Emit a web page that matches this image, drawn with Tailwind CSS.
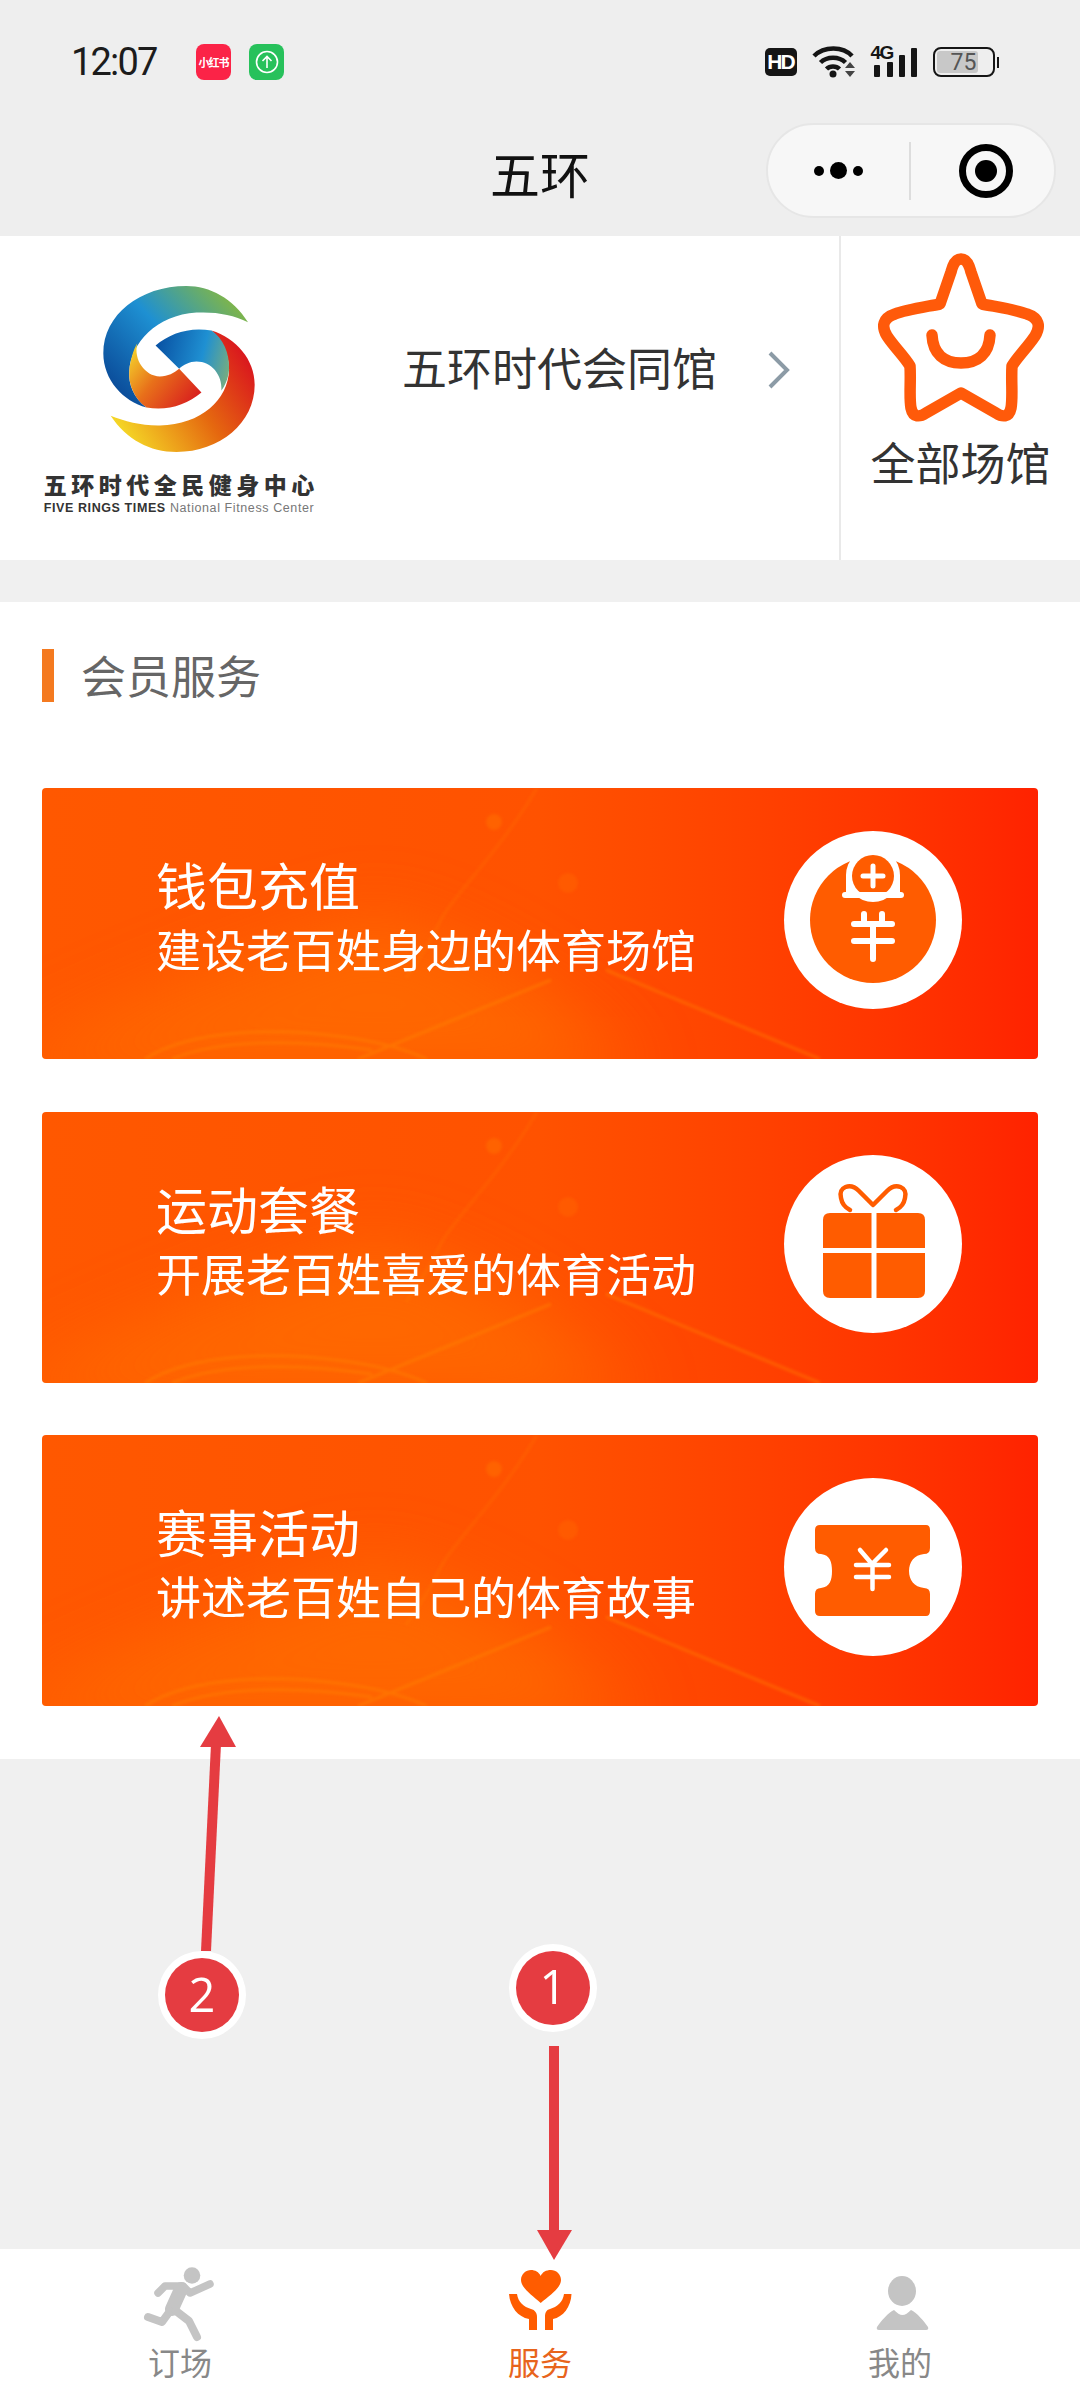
<!DOCTYPE html>
<html lang="zh-CN">
<head>
    <meta charset="UTF-8">
    <meta name="viewport" content="width=device-width, initial-scale=1.0">
    <title>五环</title>
    <script src="https://cdn.jsdelivr.net/npm/@tailwindcss/browser@4"></script>
</head>
<body class="bg-[#f0f0f0] font-['Noto_Sans_CJK_SC',sans-serif]">
<div class="relative flex flex-col w-[1080px] h-[2400px] overflow-hidden">

    <!-- status bar -->
    <div class="flex items-center h-[124px] bg-[#eeeeee] pl-[71px] pr-[81px]">
        <span class="w-[125px] font-['Roboto',sans-serif] text-[38px] leading-none text-[#1c1c1c] tracking-[-1.8px]">12:07</span>
        <div class="flex items-center justify-center w-[35px] h-[36px] rounded-[8px] bg-[#fb2347] text-white text-[11px] font-bold tracking-[-1px] whitespace-nowrap overflow-hidden">小红书</div>
        <div class="flex items-center justify-center w-[35px] h-[36px] ml-[18px] rounded-[8px] bg-[#27c15b]">
            <svg width="24" height="24" viewBox="0 0 24 24" fill="none" stroke="white" stroke-width="1.6"><circle cx="12" cy="12" r="10.5"/><path d="M12 18V6.5M7.5 11 12 6.5l4.500 4.500"/></svg>
        </div>
        <div class="flex items-center ml-auto h-[40px]">
            <div class="flex items-center justify-center w-[32px] h-[28px] rounded-[5px] bg-[#151515] text-white font-['Liberation_Sans',sans-serif] font-bold text-[21px] tracking-[-2px]">HD</div>
            <svg class="ml-[15px]" width="44" height="34" viewBox="0 0 44 34" fill="none" stroke="#151515" stroke-width="4.500">
                <path d="M2 11C12 1 31 1 40 11"/>
                <path d="M8.500 17.500C15 11 27 11 33.500 17.500"/>
                <path d="M14.500 24C18 20.500 24 20.500 27.500 24"/>
                <circle cx="21" cy="29" r="3.500" fill="#151515" stroke="none"/>
                <path d="M38 17l-5 6h10zM38 32l-5-6h10z" fill="#444" stroke="none"/>
            </svg>
            <div class="relative w-[48px] h-[32px] ml-[13px]">
                <span class="absolute left-[2px] top-[-3px] font-['Liberation_Sans',sans-serif] font-bold text-[19px] leading-[19px] tracking-[-1.5px] text-[#151515]">4G</span>
                <svg class="absolute inset-0" width="48" height="32" viewBox="0 0 48 32" fill="#151515">
                    <rect x="5" y="19" width="6" height="12" rx="1"/>
                    <rect x="18" y="16" width="6" height="15" rx="1"/>
                    <rect x="30" y="9" width="6" height="22" rx="1"/>
                    <rect x="42" y="2" width="6" height="29" rx="1"/>
                </svg>
            </div>
            <div class="flex items-center ml-[16px]">
                <div class="relative w-[62px] h-[30px] rounded-[8px] border-[2.500px] border-[#151515]">
                    <div class="absolute left-[2px] top-[2px] bottom-[2px] w-[41px] bg-[#c8c8c8] rounded-[3px]"></div>
                    <span class="absolute inset-0 flex items-center justify-center font-['Roboto',sans-serif] text-[23px] leading-none text-[#555555]">75</span>
                </div>
                <div class="w-[2.500px] h-[11px] ml-[2px] bg-[#151515]"></div>
            </div>
        </div>
    </div>

    <!-- nav bar -->
    <div class="relative h-[112px] bg-[#eeeeee]">
        <div class="flex items-center justify-center h-[96px] text-[50px] text-[#111111]">五环</div>
        <div class="absolute right-[24px] top-[-1px] flex items-center w-[290px] h-[95px] rounded-full bg-[#f7f7f7] border-2 border-[#e6e6e6]">
            <div class="flex items-center justify-center gap-[6px] w-[141px]">
                <span class="w-[10px] h-[10px] rounded-full bg-black"></span>
                <span class="w-[17px] h-[17px] rounded-full bg-black"></span>
                <span class="w-[10px] h-[10px] rounded-full bg-black"></span>
            </div>
            <div class="w-[2px] h-[58px] bg-[#dddddd]"></div>
            <div class="flex items-center justify-center flex-1 pl-[7px]">
                <div class="flex items-center justify-center w-[54px] h-[54px] rounded-full border-[7px] border-black">
                    <span class="w-[22px] h-[22px] rounded-full bg-black"></span>
                </div>
            </div>
        </div>
    </div>

    <!-- venue row -->
    <div class="flex h-[324px] bg-white">
        <div class="flex items-start w-[841px] border-r-2 border-[#e9e9e9]">
            <div class="flex flex-col items-center w-[270px] ml-[44px] mt-[50px] text-[#333333]">
                <svg width="152" height="166" viewBox="250 78 455 499">
                    <defs>
                        <linearGradient id="lgBlue" x1="0.1" y1="0.9" x2="1" y2="0.2">
                            <stop offset="0" stop-color="#0a4a98"/><stop offset="0.5" stop-color="#1e90d2"/><stop offset="1" stop-color="#86b840"/>
                        </linearGradient>
                        <linearGradient id="lgRed" x1="0" y1="0.8" x2="1" y2="0.25">
                            <stop offset="0" stop-color="#f6e028"/><stop offset="0.55" stop-color="#e5680f"/><stop offset="1" stop-color="#d9121f"/>
                        </linearGradient>
                        <linearGradient id="lgInBlue" x1="0" y1="0.5" x2="1" y2="0.7">
                            <stop offset="0" stop-color="#0a55a6"/><stop offset="0.6" stop-color="#1f90d2"/><stop offset="1" stop-color="#76ad80"/>
                        </linearGradient>
                        <linearGradient id="lgInOrange" x1="0" y1="0.1" x2="1" y2="0.8">
                            <stop offset="0" stop-color="#f4d62c"/><stop offset="0.45" stop-color="#e8701a"/><stop offset="1" stop-color="#d81c1e"/>
                        </linearGradient>
                    </defs>
                    <path fill="url(#lgBlue)" d="M685 187C640 115 570 78 500 78C360 78 250 165 250 280C250 360 310 425 380 443C340 415 325 370 328 335C332 250 410 165 530 158C590 155 640 165 685 187Z"/>
                    <path fill="url(#lgRed)" d="M272 468C320 540 390 577 470 577C600 577 705 490 705 375C705 300 650 235 575 212C610 245 628 285 628 330C625 420 545 495 420 497C365 498 315 485 272 468Z"/>
                    <path fill="url(#lgInBlue)" d="M407 257C450 220 510 200 575 212C610 235 630 280 628 330C626 355 615 380 605 392C608 345 575 305 530 305C510 305 490 315 478 327Z"/>
                    <path fill="url(#lgInOrange)" d="M545 398C500 435 440 455 380 443C345 420 325 375 328 335C330 305 340 270 352 250C340 300 375 348 420 350C445 350 462 340 478 327Z"/>
                </svg>
                <div class="mt-[19px] text-[23px] leading-[26px] font-black tracking-[4.500px] mr-[-4.500px] whitespace-nowrap">五环时代全民健身中心</div>
                <div class="mt-[3px] font-['Liberation_Sans',sans-serif] text-[12.500px] leading-[16px] tracking-[0.6px] whitespace-nowrap text-[#777777]"><span class="font-bold text-[#333333]">FIVE RINGS TIMES</span> National Fitness Center</div>
            </div>
            <div class="ml-[88px] mt-[101px] text-[45px] leading-[60px] text-[#333333] whitespace-nowrap">五环时代会同馆</div>
            <svg class="ml-[50px] mt-[115px]" width="24" height="38" viewBox="0 0 24 38" fill="none" stroke="#8c9ba6" stroke-width="4"><path d="M3 2 20 19 3 36"/></svg>
        </div>
        <div class="flex flex-col items-center flex-1 pt-[14px]">
            <svg width="176" height="176" viewBox="1 0 176 176" fill="none" stroke="#ff5a0a" stroke-width="11.500" stroke-linecap="round" stroke-linejoin="round">
                <path d="M89 9C94 9 97 14 99 22L110 54C125 57 145 60 155 64C167 68 169 76 163 86C155 98 146 106 140 116C139 130 141 148 139 158C137 168 130 167 124 163L89 143L54 163C48 167 41 168 39 158C37 148 39 130 38 116C32 106 23 98 15 86C9 76 11 68 23 64C33 60 53 57 68 54L79 22C81 14 84 9 89 9Z"/>
                <path d="M60 85C61 104 72 113 89 113C106 113 117 104 118 85"/>
            </svg>
            <div class="mt-[6px] text-[45px] leading-[60px] text-[#333333] whitespace-nowrap">全部场馆</div>
        </div>
    </div>

    <!-- member services -->
    <div class="mt-[42px] h-[1157px] bg-white pt-[47px]">
        <div class="flex items-center h-[53px] pl-[42px]">
            <div class="w-[12px] h-[53px] bg-[#f47a20]"></div>
            <div class="ml-[27px] mt-[-3px] text-[45px] leading-[53px] text-[#666666]">会员服务</div>
        </div>

        <div class="flex flex-col gap-[52.500px] mt-[86px] px-[42px]">
            <!-- card 1 -->
            <div class="relative flex items-start justify-between h-[271px] rounded-[4px] overflow-hidden bg-linear-to-r from-[#ff5800] via-[#ff5200] to-[#ff2200]">
                <svg class="absolute inset-0" width="996" height="271" viewBox="0 0 996 271" fill="none">
                    <defs>
                        <filter id="blurBig" x="-40%" y="-100%" width="180%" height="300%"><feGaussianBlur stdDeviation="36"/></filter>
                        <filter id="blurSmall" x="-20%" y="-20%" width="140%" height="140%"><feGaussianBlur stdDeviation="1.500"/></filter>
                    </defs>
                    <path d="M-60 290C90 210 210 170 330 130C420 150 520 210 600 290Z" fill="#ff7400" opacity="0.6" filter="url(#blurBig)"/>
                    <g stroke="#ff8a00" stroke-width="3" opacity="0.4" filter="url(#blurSmall)">
                        <path d="M103 271C150 240 240 240 302 249C340 254 365 262 385 271"/>
                        <path d="M130 271C180 250 260 252 330 262"/>
                        <path d="M316 271 509 192"/>
                        <path d="M564 182 778 271"/>
                        <path d="M495 0C460 60 410 110 400 130C385 160 375 175 364 190" opacity="0.5"/>
                        <circle cx="452" cy="34" r="8" fill="#ff7a00" stroke="none"/>
                        <circle cx="526" cy="95" r="10" fill="#ff6a00" stroke="none"/>
                    </g>
                </svg>
                <div class="relative pl-[114px] pt-[68px] text-white">
                    <div class="text-[51px] leading-[56px]">钱包充值</div>
                    <div class="mt-[9px] text-[45px] leading-[56px] whitespace-nowrap">建设老百姓身边的体育场馆</div>
                </div>
                <svg class="relative mt-[43px] mr-[76px]" width="178" height="178" viewBox="0 0 178 178">
                    <circle cx="89" cy="89" r="89" fill="white"/>
                    <circle cx="89" cy="89" r="63" fill="#ff5c00"/>
                    <circle cx="89" cy="44" r="27" fill="white"/>
                    <rect x="62" y="44" width="54" height="20" fill="white"/>
                    <circle cx="89" cy="45" r="21" fill="#ff5c00"/>
                    <path d="M61 64H117" stroke="white" stroke-width="6" stroke-linecap="round"/>
                    <path d="M79 45H99M89 35V55" stroke="white" stroke-width="5" stroke-linecap="round"/>
                    <path d="M80 83V93M98 83V93M70 93H108M70 110H108M89 93V128" stroke="white" stroke-width="6" stroke-linecap="round" fill="none"/>
                </svg>
            </div>

            <!-- card 2 -->
            <div class="relative flex items-start justify-between h-[271px] rounded-[4px] overflow-hidden bg-linear-to-r from-[#ff5800] via-[#ff5200] to-[#ff2200]">
                <svg class="absolute inset-0" width="996" height="271" viewBox="0 0 996 271" fill="none">
                    <path d="M-60 290C90 210 210 170 330 130C420 150 520 210 600 290Z" fill="#ff7400" opacity="0.6" filter="url(#blurBig)"/>
                    <g stroke="#ff8a00" stroke-width="3" opacity="0.4" filter="url(#blurSmall)">
                        <path d="M103 271C150 240 240 240 302 249C340 254 365 262 385 271"/>
                        <path d="M130 271C180 250 260 252 330 262"/>
                        <path d="M316 271 509 192"/>
                        <path d="M564 182 778 271"/>
                        <path d="M495 0C460 60 410 110 400 130C385 160 375 175 364 190" opacity="0.5"/>
                        <circle cx="452" cy="34" r="8" fill="#ff7a00" stroke="none"/>
                        <circle cx="526" cy="95" r="10" fill="#ff6a00" stroke="none"/>
                    </g>
                </svg>
                <div class="relative pl-[114px] pt-[68px] text-white">
                    <div class="text-[51px] leading-[56px]">运动套餐</div>
                    <div class="mt-[9px] text-[45px] leading-[56px] whitespace-nowrap">开展老百姓喜爱的体育活动</div>
                </div>
                <svg class="relative mt-[43px] mr-[76px]" width="178" height="178" viewBox="0 0 178 178">
                    <circle cx="89" cy="89" r="89" fill="white"/>
                    <path d="M46 58H87.500V93H39V65Q39 58 46 58ZM92.500 58H134Q141 58 141 65V93H92.500ZM39 98H87.500V143H46Q39 143 39 136ZM92.500 98H141V136Q141 143 134 143H92.500Z" fill="#ff5c00"/>
                    <path d="M89 50 75 36C66 27 54 32 57 43C58 49 62 53 66 55M89 50 103 36C112 27 124 32 121 43C120 49 116 53 112 55" fill="none" stroke="#ff5c00" stroke-width="4.500" stroke-linecap="round"/>
                </svg>
            </div>

            <!-- card 3 -->
            <div class="relative flex items-start justify-between h-[271px] rounded-[4px] overflow-hidden bg-linear-to-r from-[#ff5800] via-[#ff5200] to-[#ff2200]">
                <svg class="absolute inset-0" width="996" height="271" viewBox="0 0 996 271" fill="none">
                    <path d="M-60 290C90 210 210 170 330 130C420 150 520 210 600 290Z" fill="#ff7400" opacity="0.6" filter="url(#blurBig)"/>
                    <g stroke="#ff8a00" stroke-width="3" opacity="0.4" filter="url(#blurSmall)">
                        <path d="M103 271C150 240 240 240 302 249C340 254 365 262 385 271"/>
                        <path d="M130 271C180 250 260 252 330 262"/>
                        <path d="M316 271 509 192"/>
                        <path d="M564 182 778 271"/>
                        <path d="M495 0C460 60 410 110 400 130C385 160 375 175 364 190" opacity="0.5"/>
                        <circle cx="452" cy="34" r="8" fill="#ff7a00" stroke="none"/>
                        <circle cx="526" cy="95" r="10" fill="#ff6a00" stroke="none"/>
                    </g>
                </svg>
                <div class="relative pl-[114px] pt-[68px] text-white">
                    <div class="text-[51px] leading-[56px]">赛事活动</div>
                    <div class="mt-[9px] text-[45px] leading-[56px] whitespace-nowrap">讲述老百姓自己的体育故事</div>
                </div>
                <svg class="relative mt-[43px] mr-[76px]" width="178" height="178" viewBox="0 0 178 178">
                    <circle cx="89" cy="89" r="89" fill="white"/>
                    <path d="M36 47H142Q146 47 146 52V70Q146 76 140 76C130 77 125 84 125 93C125 102 130 109 140 110Q146 110 146 116V133Q146 138 142 138H36Q31 138 31 133V116Q31 110 37 110C46 109 48 102 48 93C48 84 46 77 37 76Q31 76 31 70V52Q31 47 36 47Z" fill="#ff5c00"/>
                    <path d="M76 72 88 86 102 72M72 87H105M72 99H105M88.500 86V111" fill="none" stroke="white" stroke-width="4.500" stroke-linecap="round" stroke-linejoin="round"/>
                </svg>
            </div>
        </div>
    </div>

    <!-- tab bar -->
    <div class="grid grid-cols-3 mt-auto h-[151px] bg-white pt-[6px]">
        <div class="flex flex-col items-center">
            <svg width="120" height="90" viewBox="0 0 120 90" fill="none" stroke="#c4c4c4" stroke-linecap="round" stroke-linejoin="round">
                <circle cx="72" cy="20.500" r="8.300" fill="#c4c4c4" stroke="none"/>
                <path d="M38 38 45 31H63L70 38 90 29" stroke-width="7.500"/>
                <path d="M61 34 52 54" stroke-width="14"/>
                <path d="M50 56 42 67 28 62" stroke-width="8"/>
                <path d="M56 56 69 66 77 82" stroke-width="8"/>
            </svg>
            <span class="-mt-[3px] text-[32px] leading-[38px] text-[#888888]">订场</span>
        </div>
        <div class="flex flex-col items-center">
            <svg width="120" height="90" viewBox="-10 0 120 90" fill="#ff5c00">
                <path d="M50.700 48C42 40 31 33 31 25C31 19 36 15 41 15C45 15 49 17 50.700 21C52.500 17 56 15 61 15C66 15 71 19 71 25C71 33 60 40 50.700 48Z"/>
                <path d="M19 39H27C28 47 34 52 41 54C45 55 47 58 47 62V75H39V64C28 62 20 52 19 39Z"/>
                <path d="M81.500 39H74C73 47 67 52 60 54C56 55 55 58 55 62V75H63V64C73 62 81 52 81.500 39Z"/>
            </svg>
            <span class="-mt-[3px] text-[32px] leading-[38px] text-[#e8641c]">服务</span>
        </div>
        <div class="flex flex-col items-center">
            <svg width="120" height="90" viewBox="0 0 120 90" fill="#c4c4c4">
                <ellipse cx="62" cy="36" rx="14" ry="15"/>
                <path d="M54 55C57 58 60 60 62.500 60C65 60 68 58 71 55C77 58 84 66 88 72Q89 75 86 75H39Q36 75 37 72C41 66 48 58 54 55Z"/>
            </svg>
            <span class="-mt-[3px] text-[32px] leading-[38px] text-[#888888]">我的</span>
        </div>
    </div>

    <!-- annotation arrows over the page -->
    <svg class="absolute inset-0 pointer-events-none" width="1080" height="2400" viewBox="0 0 1080 2400">
        <path d="M201 1951 211 1744 221 1744 211 1951Z" fill="#e53c41"/>
        <path d="M219 1716 236 1747H200Z" fill="#e53c41"/>
        <circle cx="202" cy="1995" r="44" fill="white"/>
        <circle cx="202" cy="1995" r="37" fill="#e53c41"/>
        <text x="202" y="2012" text-anchor="middle" fill="white" font-family="Open Sans, sans-serif" font-size="47">2</text>
        <rect x="549" y="2046" width="10" height="186" fill="#e53c41"/>
        <path d="M537 2230H572L554 2260Z" fill="#e53c41"/>
        <circle cx="553" cy="1988" r="44" fill="white"/>
        <circle cx="553" cy="1988" r="37" fill="#e53c41"/>
        <text x="553" y="2004" text-anchor="middle" fill="white" font-family="Open Sans, sans-serif" font-size="47">1</text>
    </svg>
</div>
</body>
</html>
